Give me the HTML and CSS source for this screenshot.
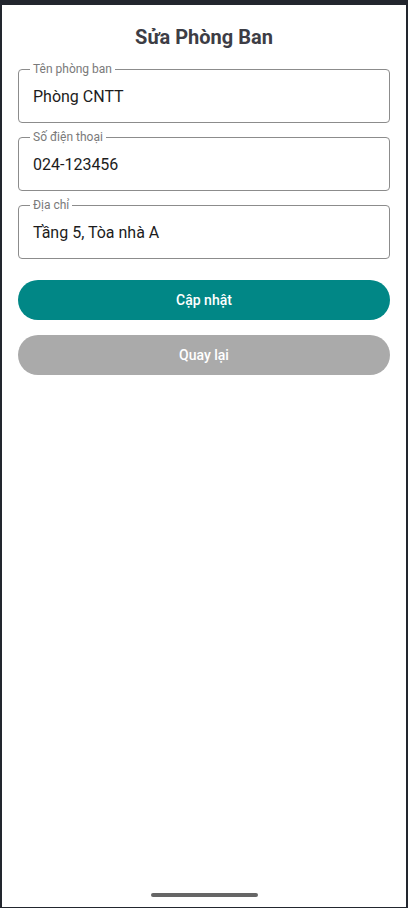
FILE: index.html
```html
<!DOCTYPE html>
<html lang="vi">
<head>
<meta charset="utf-8">
<title>Sửa Phòng Ban</title>
<link rel="stylesheet" href="styles.css">
</head>
<body>
<div class="screen">
  <h1 class="title">Sửa Phòng Ban</h1>
  <div class="form">
    <div class="field">
      <span class="label">Tên phòng ban</span>
      <span class="value">Phòng CNTT</span>
    </div>
    <div class="field">
      <span class="label">Số điện thoại</span>
      <span class="value">024-123456</span>
    </div>
    <div class="field">
      <span class="label">Địa chỉ</span>
      <span class="value">Tầng 5, Tòa nhà A</span>
    </div>
  </div>
  <div class="actions">
    <button class="btn btn-primary">Cập nhật</button>
    <button class="btn btn-secondary">Quay lại</button>
  </div>
  <div class="home-indicator"></div>
</div>
</body>
</html>
```

FILE: styles.css
```css
* { box-sizing: border-box; }
html, body { margin: 0; padding: 0; }
body {
  background: #22262e;
  font-family: Roboto, "Noto Sans", sans-serif;
  padding: 5px 2px 1px 2px;
  height: 908px;
}
.screen {
  background: #ffffff;
  height: 902px;
  display: flex;
  flex-direction: column;
  padding: 0 16px;
}
.title {
  margin: 20px 0 0 0;
  font-size: 20px;
  line-height: 24px;
  font-weight: 700;
  color: #3d3d45;
  text-align: center;
}
.form {
  display: flex;
  flex-direction: column;
  gap: 14px;
  margin-top: 20px;
}
.field {
  position: relative;
  height: 54px;
  border: 1px solid #8c8c8c;
  border-radius: 4px;
  display: flex;
  align-items: center;
  padding-left: 14px;
}
.label {
  position: absolute;
  left: 11px;
  top: -8px;
  padding: 0 3px;
  background: #fff;
  font-size: 12px;
  line-height: 14px;
  color: #7a7a7a;
}
.value {
  font-size: 16px;
  color: #1c1c1c;
  padding-top: 1px;
}
.actions {
  display: flex;
  flex-direction: column;
  gap: 15px;
  margin-top: 21px;
}
.btn {
  height: 40px;
  border: none;
  border-radius: 20px;
  color: #ffffff;
  font-family: Roboto, "Noto Sans", sans-serif;
  font-size: 14px;
  font-weight: 500;
  padding: 0;
}
.btn-primary { background: #018786; }
.btn-secondary { background: #aaaaaa; }
.home-indicator {
  margin: auto auto 10px auto;
  width: 107px;
  height: 4px;
  border-radius: 2px;
  background: #666666;
}
```
